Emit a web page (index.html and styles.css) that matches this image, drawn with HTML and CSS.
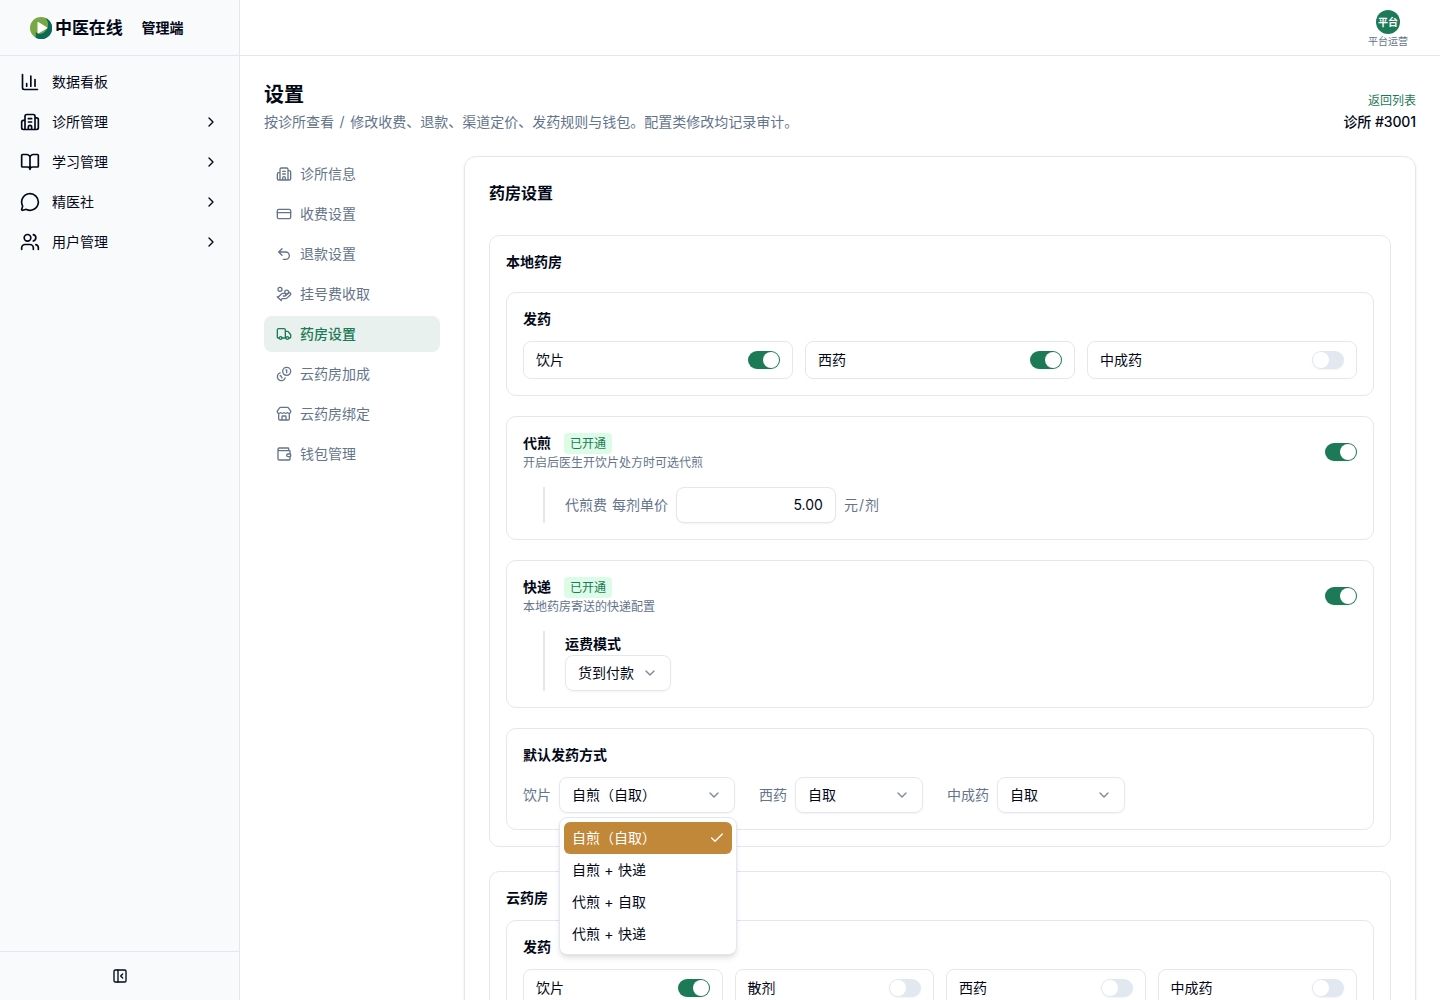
FILE: index.html
```html
<!DOCTYPE html>
<html lang="zh-CN">
<head>
<meta charset="utf-8">
<title>中医在线 管理端</title>
<link rel="stylesheet" href="styles.css">
</head>
<body>
<svg class="sprite" aria-hidden="true">
  <symbol id="chart" viewBox="0 0 24 24"><path d="M3 3v16a2 2 0 0 0 2 2h16M18 17V9M13 17V5M8 17v-3"/></symbol>
  <symbol id="building" viewBox="0 0 24 24"><path d="M10 12h4M10 8h4M14 21v-3a2 2 0 0 0-4 0v3M6 10H4a2 2 0 0 0-2 2v7a2 2 0 0 0 2 2h16a2 2 0 0 0 2-2V9a2 2 0 0 0-2-2h-2M6 21V5a2 2 0 0 1 2-2h8a2 2 0 0 1 2 2v16"/></symbol>
  <symbol id="book" viewBox="0 0 24 24"><path d="M12 7v14M3 18a1 1 0 0 1-1-1V4a1 1 0 0 1 1-1h5a4 4 0 0 1 4 4 4 4 0 0 1 4-4h5a1 1 0 0 1 1 1v13a1 1 0 0 1-1 1h-6a3 3 0 0 0-3 3 3 3 0 0 0-3-3z"/></symbol>
  <symbol id="message" viewBox="0 0 24 24"><path d="M2.992 16.342a2 2 0 0 1 .094 1.167l-1.065 3.29a1 1 0 0 0 1.236 1.168l3.413-.998a2 2 0 0 1 1.099.092 10 10 0 1 0-4.777-4.719"/></symbol>
  <symbol id="users" viewBox="0 0 24 24"><path d="M16 21v-2a4 4 0 0 0-4-4H6a4 4 0 0 0-4 4v2M16 3.128a4 4 0 0 1 0 7.744M22 21v-2a4 4 0 0 0-3-3.87"/><circle cx="9" cy="7" r="4"/></symbol>
  <symbol id="card" viewBox="0 0 24 24"><rect x="2" y="5" width="20" height="14" rx="2"/><path d="M2 10h20"/></symbol>
  <symbol id="undo" viewBox="0 0 24 24"><path d="M9 14 4 9l5-5M4 9h10.5a5.5 5.5 0 0 1 5.5 5.5 5.5 5.5 0 0 1-5.5 5.5H11"/></symbol>
  <symbol id="hand-coins" viewBox="0 0 24 24"><path d="M11 15h2a2 2 0 1 0 0-4h-3c-.6 0-1.1.2-1.4.6L3 17"/><path d="m7 21 1.6-1.4c.3-.4.8-.6 1.4-.6h4c1.1 0 2.1-.4 2.8-1.2l4.6-4.4a2 2 0 0 0-2.75-2.91l-4.2 3.9M2 16l6 6"/><circle cx="16" cy="9" r="2.9"/><circle cx="6" cy="5" r="3"/></symbol>
  <symbol id="truck" viewBox="0 0 24 24"><path d="M14 18V6a2 2 0 0 0-2-2H4a2 2 0 0 0-2 2v11a1 1 0 0 0 1 1h2M15 18H9M19 18h2a1 1 0 0 0 1-1v-3.65a1 1 0 0 0-.22-.624l-3.48-4.35A1 1 0 0 0 17.52 8H14"/><circle cx="17" cy="18" r="2"/><circle cx="7" cy="18" r="2"/></symbol>
  <symbol id="coins" viewBox="0 0 24 24"><path d="M13.744 17.736a6 6 0 1 1-7.48-7.48M15 6h1v4M6.134 14.768l.866-.5 2 3.464"/><circle cx="16" cy="8" r="6"/></symbol>
  <symbol id="store" viewBox="0 0 24 24"><path d="M15 21v-5a1 1 0 0 0-1-1h-4a1 1 0 0 0-1 1v5M17.774 10.31a1.12 1.12 0 0 0-1.549 0 2.5 2.5 0 0 1-3.451 0 1.12 1.12 0 0 0-1.548 0 2.5 2.5 0 0 1-3.452 0 1.12 1.12 0 0 0-1.549 0 2.5 2.5 0 0 1-3.77-3.248l2.889-4.184A2 2 0 0 1 7 2h10a2 2 0 0 1 1.653.873l2.895 4.192a2.5 2.5 0 0 1-3.774 3.244M4 10.95V19a2 2 0 0 0 2 2h12a2 2 0 0 0 2-2v-8.05"/></symbol>
  <symbol id="wallet" viewBox="0 0 24 24"><path d="M19 7V4a1 1 0 0 0-1-1H5a2 2 0 0 0 0 4h15a1 1 0 0 1 1 1v4h-3a2 2 0 0 0 0 4h3a1 1 0 0 0 1-1v-2a1 1 0 0 0-1-1M3 5v14a2 2 0 0 0 2 2h15a1 1 0 0 0 1-1v-4"/></symbol>
  <symbol id="panel" viewBox="0 0 24 24"><rect x="3" y="3" width="18" height="18" rx="2"/><path d="M9 3v18M16 15l-3-3 3-3"/></symbol>
  <symbol id="right" viewBox="0 0 24 24"><path d="m9 18 6-6-6-6"/></symbol>
  <symbol id="down" viewBox="0 0 24 24"><path d="m6 9 6 6 6-6"/></symbol>
  <symbol id="check" viewBox="0 0 24 24"><path d="M20 6 9 17l-5-5"/></symbol>
</svg>
<div class="app">
  <aside class="sidebar">
    <div class="brand">
      <svg class="logo" viewBox="0 0 22 22"><circle cx="11" cy="11" r="11" fill="#78a843"/><path d="M15.5 1A11 11 0 1 1 5.8 20.7V15C8 17.5 12 17.5 15 14.5 19 10.500 19 5 15.500 1z" fill="#0c6b58"/><path d="M7.500 5.800v9.800c0 .8.6 1 1.200.7l8.200-4.700c.7-.4.7-1 0-1.400L8.700 5.200c-.7-.4-1.200-.2-1.200.6z" fill="#fff"/></svg>
      <span class="brand-name">中医在线</span>
      <span class="brand-role">管理端</span>
    </div>
    <nav class="menu">
      <a class="menu-item"><svg class="icon icon-lg"><use href="#chart"/></svg><span>数据看板</span></a>
      <a class="menu-item"><svg class="icon icon-lg"><use href="#building"/></svg><span>诊所管理</span><svg class="icon menu-arrow"><use href="#right"/></svg></a>
      <a class="menu-item"><svg class="icon icon-lg"><use href="#book"/></svg><span>学习管理</span><svg class="icon menu-arrow"><use href="#right"/></svg></a>
      <a class="menu-item"><svg class="icon icon-lg"><use href="#message"/></svg><span>精医社</span><svg class="icon menu-arrow"><use href="#right"/></svg></a>
      <a class="menu-item"><svg class="icon icon-lg"><use href="#users"/></svg><span>用户管理</span><svg class="icon menu-arrow"><use href="#right"/></svg></a>
    </nav>
    <div class="sidebar-foot"><svg class="icon"><use href="#panel"/></svg></div>
  </aside>
  <div class="main">
    <header class="topbar">
      <div class="account"><span class="avatar">平台</span><span class="account-name">平台运营</span></div>
    </header>
    <main class="content">
      <div class="page-head">
        <div>
          <h1 class="page-title">设置</h1>
          <p class="page-desc">按诊所查看 <span class="slash">/</span> 修改收费、退款、渠道定价、发药规则与钱包。配置类修改均记录审计。</p>
        </div>
        <div class="page-side">
          <a class="back">返回列表</a>
          <span class="clinic">诊所 #3001</span>
        </div>
      </div>
      <div class="columns">
        <nav class="tabs">
          <a class="tab"><svg class="icon"><use href="#building"/></svg>诊所信息</a>
          <a class="tab"><svg class="icon"><use href="#card"/></svg>收费设置</a>
          <a class="tab"><svg class="icon"><use href="#undo"/></svg>退款设置</a>
          <a class="tab"><svg class="icon"><use href="#hand-coins"/></svg>挂号费收取</a>
          <a class="tab tab-active"><svg class="icon"><use href="#truck"/></svg>药房设置</a>
          <a class="tab"><svg class="icon"><use href="#coins"/></svg>云药房加成</a>
          <a class="tab"><svg class="icon"><use href="#store"/></svg>云药房绑定</a>
          <a class="tab"><svg class="icon"><use href="#wallet"/></svg>钱包管理</a>
        </nav>
        <section class="panel">
          <h2 class="panel-title">药房设置</h2>
          <div class="group">
            <h3 class="heading">本地药房</h3>
            <div class="card">
              <h4 class="heading">发药</h4>
              <div class="toggles cols-3">
                <div class="toggle"><span>饮片</span><span class="switch on"></span></div>
                <div class="toggle"><span>西药</span><span class="switch on"></span></div>
                <div class="toggle"><span>中成药</span><span class="switch"></span></div>
              </div>
            </div>
            <div class="card card-wide">
              <div class="card-head">
                <div>
                  <div class="title-row"><h4 class="heading">代煎</h4><span class="badge">已开通</span></div>
                  <p class="hint">开启后医生开饮片处方时可选代煎</p>
                </div>
                <span class="switch on"></span>
              </div>
              <div class="nested price"><span>代煎费 每剂单价</span><input class="input" value="5.00"><span>元<span class="slash">/</span>剂</span></div>
            </div>
            <div class="card card-wide">
              <div class="card-head">
                <div>
                  <div class="title-row"><h4 class="heading">快递</h4><span class="badge">已开通</span></div>
                  <p class="hint">本地药房寄送的快递配置</p>
                </div>
                <span class="switch on"></span>
              </div>
              <div class="nested shipping">
                <div class="heading shipping-label">运费模式</div>
                <div class="select select-auto"><span>货到付款</span><svg class="icon caret"><use href="#down"/></svg></div>
              </div>
            </div>
            <div class="card">
              <h4 class="heading">默认发药方式</h4>
              <div class="defaults">
                <div class="field"><span>饮片</span>
                  <div class="select select-lg"><span>自煎（自取）</span><svg class="icon caret"><use href="#down"/></svg>
                    <div class="options">
                      <div class="option selected"><span>自煎（自取）</span><svg class="icon"><use href="#check"/></svg></div>
                      <div class="option">自煎 + 快递</div>
                      <div class="option">代煎 + 自取</div>
                      <div class="option">代煎 + 快递</div>
                    </div>
                  </div>
                </div>
                <div class="field"><span>西药</span><div class="select"><span>自取</span><svg class="icon caret"><use href="#down"/></svg></div></div>
                <div class="field"><span>中成药</span><div class="select"><span>自取</span><svg class="icon caret"><use href="#down"/></svg></div></div>
              </div>
            </div>
          </div>
          <div class="group group-tight">
            <h3 class="heading">云药房</h3>
            <div class="card">
              <h4 class="heading">发药</h4>
              <div class="toggles cols-4">
                <div class="toggle"><span>饮片</span><span class="switch on"></span></div>
                <div class="toggle"><span>散剂</span><span class="switch"></span></div>
                <div class="toggle"><span>西药</span><span class="switch"></span></div>
                <div class="toggle"><span>中成药</span><span class="switch"></span></div>
              </div>
            </div>
          </div>
        </section>
      </div>
    </main>
  </div>
</div>
</body>
</html>
```
FILE: styles.css
```css
:root {
  --ink: #020817;
  --muted: #64748b;
  --line: #e2e8f0;
  --green: #1d7a57;
  --shadow: 0 1px 2px rgba(0, 0, 0, .05);
}
* { box-sizing: border-box; }
body {
  margin: 0;
  font: 14px/20px Inter, "Noto Sans CJK SC", sans-serif;
  color: var(--ink);
  background: #fff;
}
h1, h2, h3, h4, p { margin: 0; }
.sprite { display: none; }
.icon {
  flex: none;
  width: 16px;
  height: 16px;
  fill: none;
  stroke: currentColor;
  stroke-width: 2;
  stroke-linecap: round;
  stroke-linejoin: round;
}
.icon-lg { width: 20px; height: 20px; }
.slash { padding: 0 1px; }

.app { display: flex; height: 100vh; overflow: hidden; }
.sidebar {
  display: flex;
  flex-direction: column;
  flex: none;
  width: 240px;
  background: #f8fafc;
  border-right: 1px solid var(--line);
}
.brand {
  display: flex;
  align-items: center;
  height: 56px;
  padding-left: 30px;
  border-bottom: 1px solid var(--line);
}
.logo { width: 22px; height: 22px; }
.brand-name { margin-left: 3px; font-size: 17px; font-weight: 600; letter-spacing: -.1px; }
.brand-role { margin-left: 19px; font-weight: 600; }
.menu { display: flex; flex-direction: column; flex: 1; gap: 4px; padding: 8px; }
.menu-item {
  display: flex;
  align-items: center;
  gap: 12px;
  height: 36px;
  padding: 0 12px;
}
.menu-arrow { margin-left: auto; }
.sidebar-foot {
  display: flex;
  align-items: center;
  justify-content: center;
  height: 49px;
  border-top: 1px solid var(--line);
}

.main { flex: 1; min-width: 0; }
.topbar {
  display: flex;
  justify-content: flex-end;
  align-items: center;
  height: 56px;
  padding: 1px 32px 0;
  border-bottom: 1px solid var(--line);
}
.account { display: flex; flex-direction: column; align-items: center; gap: 1px; }
.avatar {
  width: 24px;
  height: 24px;
  border-radius: 50%;
  background: var(--green);
  color: #fff;
  font-size: 10px;
  font-weight: 600;
  line-height: 24px;
  text-align: center;
}
.account-name { font-size: 10px; line-height: 12px; color: var(--muted); }

.content { padding: 24px; }
.page-head { display: flex; justify-content: space-between; align-items: flex-end; }
.page-title { font-size: 20px; font-weight: 600; line-height: 30px; }
.page-desc { margin-top: 2px; color: var(--muted); word-spacing: .6px; }
.page-side { display: flex; flex-direction: column; align-items: flex-end; gap: 3px; }
.back { font-size: 12px; line-height: 16px; color: var(--green); }
.clinic { font-weight: 500; letter-spacing: -.1px; }

.columns { display: flex; align-items: flex-start; gap: 24px; margin-top: 24px; }
.tabs { display: flex; flex-direction: column; flex: none; gap: 4px; width: 176px; }
.tab {
  display: flex;
  align-items: center;
  gap: 8px;
  height: 36px;
  padding: 0 12px;
  border-radius: 8px;
  color: var(--muted);
}
.tab-active { background: #e8f1ed; color: var(--green); font-weight: 500; }

.panel {
  flex: 1;
  padding: 24px;
  border: 1px solid var(--line);
  border-radius: 12px;
  box-shadow: 0 1px 3px rgba(0, 0, 0, .08);
}
.panel-title { font-size: 16px; font-weight: 600; line-height: 24px; margin-bottom: 30px; }
.group {
  display: flex;
  flex-direction: column;
  gap: 20px;
  padding: 16px;
  border: 1px solid var(--line);
  border-radius: 10px;
}
.group + .group { margin-top: 24px; }
.group-tight { gap: 12px; }
.heading { font-size: 14px; font-weight: 600; line-height: 20px; }
.card {
  display: flex;
  flex-direction: column;
  gap: 12px;
  padding: 16px;
  border: 1px solid var(--line);
  border-radius: 10px;
}
.card-wide { gap: 16px; }
.toggles { display: grid; gap: 12px; }
.cols-3 { grid-template-columns: repeat(3, 1fr); }
.cols-4 { grid-template-columns: repeat(4, 1fr); }
.toggle {
  display: flex;
  align-items: center;
  justify-content: space-between;
  height: 38px;
  padding: 0 12px;
  border: 1px solid var(--line);
  border-radius: 8px;
}
.switch {
  display: flex;
  flex: none;
  width: 32px;
  height: 18px;
  padding: 1px;
  border-radius: 9px;
  background: var(--line);
  box-shadow: var(--shadow);
}
.switch::before { content: ""; width: 16px; height: 16px; border-radius: 50%; background: #fff; }
.switch.on { justify-content: flex-end; background: var(--green); }

.card-head { display: flex; align-items: center; justify-content: space-between; }
.title-row { display: flex; gap: 13px; height: 22px; }
.badge {
  height: 21px;
  padding: 0 6px;
  border-radius: 4px;
  background: #dcfce7;
  color: var(--green);
  font-size: 12px;
  line-height: 21px;
}
.hint { font-size: 12px; line-height: 16px; color: var(--muted); }
.nested { margin-left: 20px; padding-left: 20px; border-left: 2px solid var(--line); }
.price { display: flex; align-items: center; gap: 8px; color: var(--muted); word-spacing: 1px; }
.input {
  width: 160px;
  height: 36px;
  padding: 0 12px 1px;
  border: 1px solid var(--line);
  border-radius: 8px;
  background: #fff;
  box-shadow: var(--shadow);
  color: var(--ink);
  font: inherit;
  text-align: right;
}
.shipping-label { height: 24px; line-height: 26px; }
.select {
  position: relative;
  display: flex;
  align-items: center;
  justify-content: space-between;
  gap: 8px;
  width: 128px;
  height: 36px;
  padding: 0 12px;
  border: 1px solid var(--line);
  border-radius: 8px;
  box-shadow: var(--shadow);
  color: var(--ink);
}
.select-auto { width: 106px; }
.select-lg { width: 176px; }
.caret { color: var(--muted); opacity: .85; }
.defaults { display: flex; gap: 24px; }
.field { display: flex; align-items: center; gap: 8px; color: var(--muted); }
.options {
  position: absolute;
  z-index: 5;
  top: 39px;
  left: -1px;
  width: 178px;
  padding: 4px;
  border: 1px solid var(--line);
  border-radius: 8px;
  background: #fff;
  box-shadow: 0 4px 6px -1px rgba(0, 0, 0, .1), 0 2px 4px -2px rgba(0, 0, 0, .1);
}
.option {
  display: flex;
  align-items: center;
  justify-content: space-between;
  height: 32px;
  padding: 0 7px 0 8px;
  border-radius: 6px;
  word-spacing: .4px;
}
.option.selected { background: #c2883a; color: #fff; }
```
